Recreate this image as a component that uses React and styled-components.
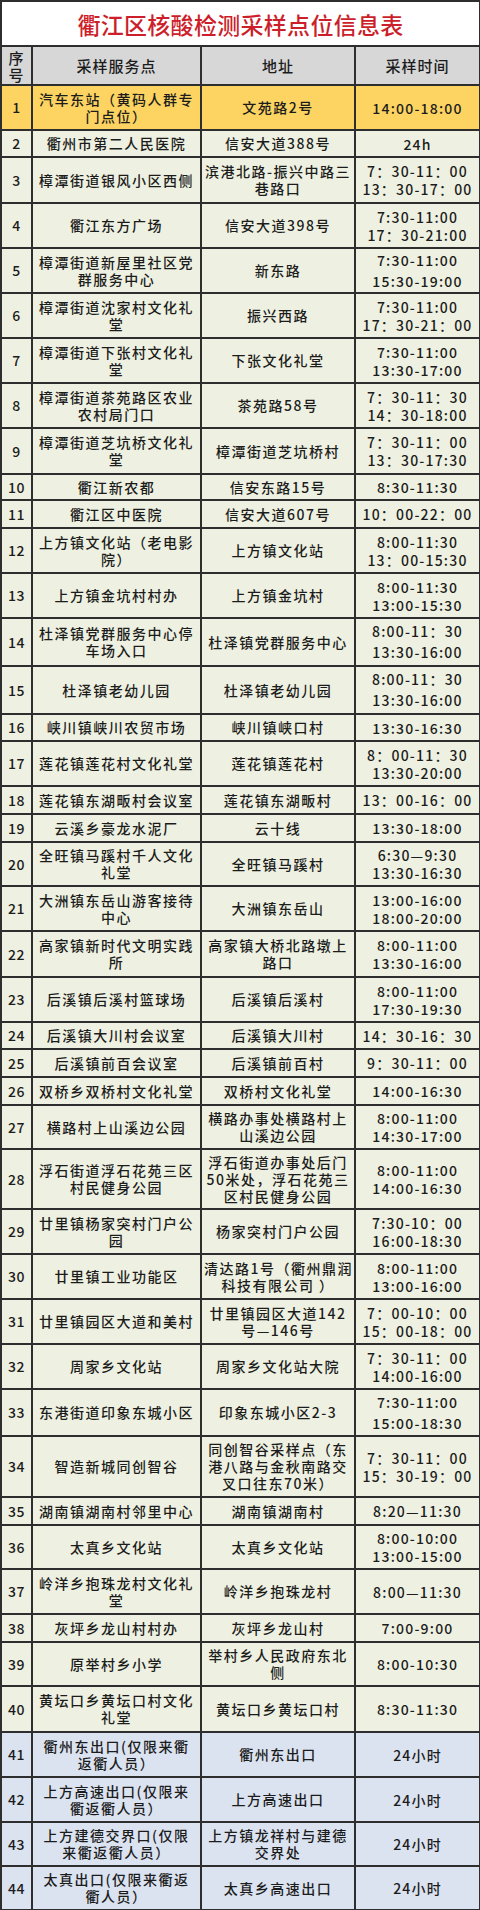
import React from "react";
import styled, { createGlobalStyle } from "styled-components";

const GlobalStyle = createGlobalStyle`
  body {
    margin: 0;
    background: #ffffff;
    font-family: "Noto Sans CJK SC", "Liberation Serif", sans-serif;
    color: #1c1c1c;
  }
`;

const tones = {
  plain: "#eef1e1",
  yellow: "#fdd462",
  blue: "#dbe3f1",
};

const Table = styled.table`
  width: 479px;
  border-collapse: collapse;
  table-layout: fixed;
`;

const TitleCell = styled.th`
  height: 43px;
  padding: 0;
  border: 2px solid #2e2e2e;
  background: #ffffff;
  color: #cc1f2b;
  font-size: 23px;
  font-weight: 500;
  letter-spacing: 0.3px;
  line-height: 40px;
  text-align: center;
`;

const HeadRow = styled.tr`
  height: 39px;
  background: #d7d7d7;
`;

const HeadCell = styled.th`
  padding: 0 2px;
  border: 2px solid #2e2e2e;
  font-size: 15px;
  font-weight: 500;
  line-height: 17px;
  letter-spacing: 1px;
  text-align: center;
  vertical-align: middle;
`;

const Row = styled.tr`
  height: ${(p) => p.$h}px;
  background: ${(p) => tones[p.$tone] || tones.plain};
`;

const Cell = styled.td`
  padding: 0 2px;
  border: 2px solid #2e2e2e;
  font-size: 14px;
  font-weight: 500;
  line-height: 17px;
  letter-spacing: 1.5px;
  text-align: center;
  vertical-align: middle;
  white-space: pre;
`;

const SeqCell = styled(Cell)`
  letter-spacing: 0.5px;
`;

const TimeCell = styled(Cell)`
  letter-spacing: 1.2px;
  line-height: ${(p) => (p.$loose ? "21px" : "18px")};
`;

// [height, name, address, time, tone, loose]
const rows = [
  [45, "汽车东站（黄码人群专\n门点位）", "文苑路2号", "14:00-18:00", "yellow"],
  [27, "衢州市第二人民医院", "信安大道388号", "24h"],
  [46, "樟潭街道银风小区西侧", "滨港北路-振兴中路三\n巷路口", "7：30-11：00\n13：30-17：00"],
  [45, "衢江东方广场", "信安大道398号", "7:30-11:00\n17：30-21:00"],
  [45, "樟潭街道新屋里社区党\n群服务中心", "新东路", "7:30-11:00\n15:30-19:00", "plain", true],
  [45, "樟潭街道沈家村文化礼\n堂", "振兴西路", "7:30-11:00\n17：30-21：00"],
  [45, "樟潭街道下张村文化礼\n堂", "下张文化礼堂", "7:30-11:00\n13:30-17:00"],
  [45, "樟潭街道茶苑路区农业\n农村局门口", "茶苑路58号", "7：30-11：30\n14：30-18:00"],
  [46, "樟潭街道芝坑桥文化礼\n堂", "樟潭街道芝坑桥村", "7：30-11：00\n13：30-17:30"],
  [26, "衢江新农都", "信安东路15号", "8:30-11:30"],
  [28, "衢江区中医院", "信安大道607号", "10：00-22：00"],
  [45, "上方镇文化站（老电影\n院）", "上方镇文化站", "8:00-11:30\n13：00-15:30"],
  [45, "上方镇金坑村村办", "上方镇金坑村", "8:00-11:30\n13:00-15:30"],
  [48, "杜泽镇党群服务中心停\n车场入口", "杜泽镇党群服务中心", "8:00-11：30\n13:30-16:00", "plain", true],
  [48, "杜泽镇老幼儿园", "杜泽镇老幼儿园", "8:00-11：30\n13:30-16:00", "plain", true],
  [27, "峡川镇峡川农贸市场", "峡川镇峡口村", "13:30-16:30"],
  [45, "莲花镇莲花村文化礼堂", "莲花镇莲花村", "8：00-11：30\n13:30-20:00"],
  [28, "莲花镇东湖畈村会议室", "莲花镇东湖畈村", "13：00-16：00"],
  [28, "云溪乡豪龙水泥厂", "云十线", "13:30-18:00"],
  [44, "全旺镇马蹊村千人文化\n礼堂", "全旺镇马蹊村", "6:30—9:30\n13:30-16:30"],
  [45, "大洲镇东岳山游客接待\n中心", "大洲镇东岳山", "13:00-16:00\n18:00-20:00"],
  [46, "高家镇新时代文明实践\n所", "高家镇大桥北路墩上\n路口", "8:00-11:00\n13:30-16:00"],
  [45, "后溪镇后溪村篮球场", "后溪镇后溪村", "8:00-11:00\n17:30-19:30"],
  [27, "后溪镇大川村会议室", "后溪镇大川村", "14：30-16：30"],
  [28, "后溪镇前百会议室", "后溪镇前百村", "9：30-11：00"],
  [28, "双桥乡双桥村文化礼堂", "双桥村文化礼堂", "14:00-16:30"],
  [44, "横路村上山溪边公园", "横路办事处横路村上\n山溪边公园", "8:00-11:00\n14:30-17:00"],
  [60, "浮石街道浮石花苑三区\n村民健身公园", "浮石街道办事处后门\n50米处，浮石花苑三\n区村民健身公园", "8:00-11:00\n14:00-16:30"],
  [45, "廿里镇杨家突村门户公\n园", "杨家突村门户公园", "7:30-10：00\n16:00-18:30"],
  [45, "廿里镇工业功能区", "清达路1号（衢州鼎润\n科技有限公司 ）", "8:00-11:00\n13:00-16:00"],
  [45, "廿里镇园区大道和美村", "廿里镇园区大道142\n号—146号", "7：00-10：00\n15：00-18：00"],
  [45, "周家乡文化站", "周家乡文化站大院", "7：30-11：00\n14:00-16:00"],
  [47, "东港街道印象东城小区", "印象东城小区2-3", "7:30-11:00\n15:00-18:30", "plain", true],
  [61, "智造新城同创智谷", "同创智谷采样点（东\n港八路与金秋南路交\n叉口往东70米）", "7：30-11：00\n15：30-19：00"],
  [28, "湖南镇湖南村邻里中心", "湖南镇湖南村", "8:20—11:30"],
  [44, "太真乡文化站", "太真乡文化站", "8:00-10:00\n13:00-15:00"],
  [45, "岭洋乡抱珠龙村文化礼\n堂", "岭洋乡抱珠龙村", "8:00—11:30"],
  [28, "灰坪乡龙山村村办", "灰坪乡龙山村", "7:00-9:00"],
  [44, "原举村乡小学", "举村乡人民政府东北\n侧", "8:00-10:30"],
  [46, "黄坛口乡黄坛口村文化\n礼堂", "黄坛口乡黄坛口村", "8:30-11:30"],
  [45, "衢州东出口(仅限来衢\n返衢人员）", "衢州东出口", "24小时", "blue"],
  [45, "上方高速出口(仅限来\n衢返衢人员）", "上方高速出口", "24小时", "blue"],
  [44, "上方建德交界口(仅限\n来衢返衢人员）", "上方镇龙祥村与建德\n交界处", "24小时", "blue"],
  [44, "太真出口(仅限来衢返\n衢人员）", "太真乡高速出口", "24小时", "blue"],
];

export default function App() {
  return (
    <>
      <GlobalStyle />
      <Table>
        <colgroup>
          <col style={{ width: 31 }} />
          <col style={{ width: 169 }} />
          <col style={{ width: 154 }} />
          <col style={{ width: 125 }} />
        </colgroup>
        <thead>
          <tr>
            <TitleCell colSpan={4}>衢江区核酸检测采样点位信息表</TitleCell>
          </tr>
          <HeadRow>
            <HeadCell>序号</HeadCell>
            <HeadCell>采样服务点</HeadCell>
            <HeadCell>地址</HeadCell>
            <HeadCell>采样时间</HeadCell>
          </HeadRow>
        </thead>
        <tbody>
          {rows.map(([h, name, addr, time, tone, loose], i) => (
            <Row key={i} $h={h} $tone={tone}>
              <SeqCell>{i + 1}</SeqCell>
              <Cell>{name}</Cell>
              <Cell>{addr}</Cell>
              <TimeCell $loose={loose}>{time}</TimeCell>
            </Row>
          ))}
        </tbody>
      </Table>
    </>
  );
}
